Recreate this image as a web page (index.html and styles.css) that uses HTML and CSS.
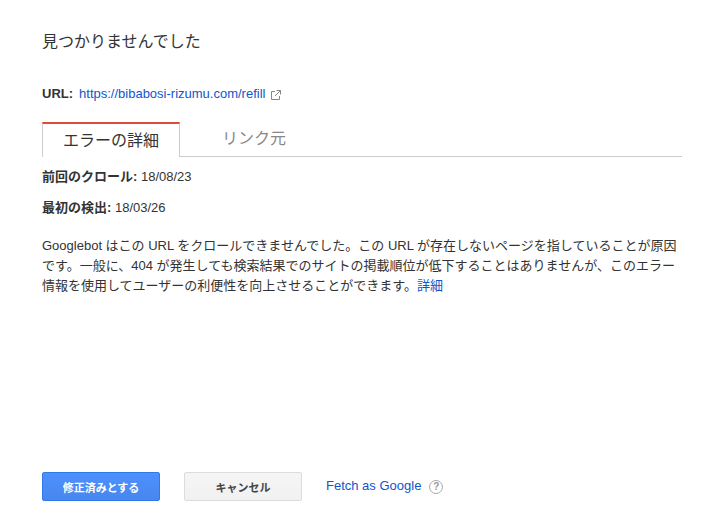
FILE: index.html
```html
<!DOCTYPE html>
<html lang="ja">
<head>
  <meta charset="UTF-8">
  <title>見つかりませんでした</title>
  <link rel="stylesheet" href="styles.css">
</head>
<body>
  <div class="dialog">
    <h1 class="title">見つかりませんでした</h1>
    <div class="url-row">
      <b>URL:</b>
      <a href="#">https://bibabosi-rizumu.com/refill</a>
      <svg class="ext" width="10" height="10" viewBox="0 0 10 10" fill="none" stroke="#888" stroke-width="1">
        <path d="M4 1.5H.5v8h8V6M5.5.5h4v4M9.5.5L4 6"/>
      </svg>
    </div>
    <div class="tabs">
      <div class="tab active">エラーの詳細</div>
      <div class="tab">リンク元</div>
    </div>
    <p class="meta"><b>前回のクロール:</b> 18/08/23</p>
    <p class="meta"><b>最初の検出:</b> 18/03/26</p>
    <p class="desc">Googlebot はこの URL をクロールできませんでした。この URL が存在しないページを指していることが原因です。一般に、404 が発生しても検索結果でのサイトの掲載順位が低下することはありませんが、このエラー情報を使用してユーザーの利便性を向上させることができます。<a href="#">詳細</a></p>
    <div class="actions">
      <button class="btn primary">修正済みとする</button>
      <button class="btn">キャンセル</button>
      <a class="fetch" href="#">Fetch as Google</a>
      <span class="help">?</span>
    </div>
  </div>
</body>
</html>
```

FILE: styles.css
```css
* { box-sizing: border-box; }
body {
  margin: 0;
  background: #fff;
  color: #333;
  font-family: "Liberation Sans", "Noto Sans CJK JP", sans-serif;
  font-size: 13px;
}
a { color: #15c; text-decoration: none; }
.dialog {
  width: 724px;
  height: 531px;
  padding: 32px 42px 0 42px;
  display: flex;
  flex-direction: column;
}
.title {
  margin: 0;
  font-size: 16px;
  font-weight: normal;
  line-height: 20px;
  color: #333;
}
.url-row {
  margin-top: 31px;
  height: 20px;
  display: flex;
  align-items: center;
  gap: 6px;
}
.url-row .ext { margin-top: 3px; }
.tabs {
  margin-top: 19px;
  height: 35px;
  display: flex;
  border-bottom: 1px solid #ccc;
}
.tab {
  width: 148px;
  font-size: 16px;
  line-height: 34px;
  text-align: center;
  color: #888;
}
.tab.active {
  width: 138px;
  height: 35px;
  color: #333;
  background: #fff;
  border: 1px solid #ccc;
  border-top: 2px solid #dd4b39;
  border-bottom: none;
}
.meta { margin: 11px 0 0 0; line-height: 18px; }
.meta + .meta { margin-top: 13px; }
.desc { margin: 19px 0 0 0; line-height: 20px; }
.actions {
  margin: auto 0 30px 0;
  display: flex;
  align-items: center;
}
.btn {
  height: 29px;
  width: 118px;
  font-family: inherit;
  font-size: 11px;
  font-weight: bold;
  color: #444;
  background: linear-gradient(#f5f5f5, #f1f1f1);
  border: 1px solid #dcdcdc;
  border-radius: 2px;
  margin-right: 24px;
}
.btn.primary {
  color: #fff;
  background: linear-gradient(#4d90fe, #4787ed);
  border-color: #3079ed;
}
.fetch { margin-top: -2px; }
.help {
  margin-left: 8px;
  width: 14px;
  height: 14px;
  border: 1.5px solid #aaa;
  border-radius: 50%;
  color: #999;
  font-size: 10px;
  font-weight: bold;
  line-height: 11px;
  text-align: center;
}
```
